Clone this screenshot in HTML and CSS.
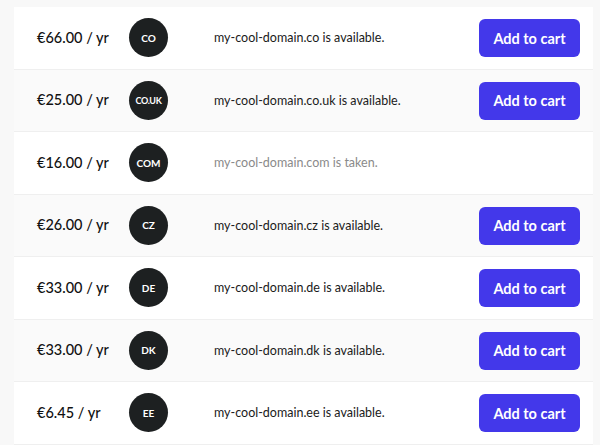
FILE: index.html
```html
<!DOCTYPE html>
<html>
<head>
<meta charset="utf-8">
<link rel="stylesheet" href="styles.css">
</head>
<body>
<div class="list">
  <div class="row">
    <div class="price">€66.00 / yr</div>
    <div class="tld">CO</div>
    <div class="msg">my-cool-domain.co is available.</div>
    <button class="btn">Add to cart</button>
  </div>
  <div class="row">
    <div class="price">€25.00 / yr</div>
    <div class="tld tld-long">CO.UK</div>
    <div class="msg">my-cool-domain.co.uk is available.</div>
    <button class="btn">Add to cart</button>
  </div>
  <div class="row">
    <div class="price">€16.00 / yr</div>
    <div class="tld">COM</div>
    <div class="msg taken">my-cool-domain.com is taken.</div>
  </div>
  <div class="row">
    <div class="price">€26.00 / yr</div>
    <div class="tld">CZ</div>
    <div class="msg">my-cool-domain.cz is available.</div>
    <button class="btn">Add to cart</button>
  </div>
  <div class="row">
    <div class="price">€33.00 / yr</div>
    <div class="tld">DE</div>
    <div class="msg">my-cool-domain.de is available.</div>
    <button class="btn">Add to cart</button>
  </div>
  <div class="row">
    <div class="price">€33.00 / yr</div>
    <div class="tld">DK</div>
    <div class="msg">my-cool-domain.dk is available.</div>
    <button class="btn">Add to cart</button>
  </div>
  <div class="row">
    <div class="price">€6.45 / yr</div>
    <div class="tld">EE</div>
    <div class="msg">my-cool-domain.ee is available.</div>
    <button class="btn">Add to cart</button>
  </div>
</div>
</body>
</html>
```

FILE: styles.css
```css
html, body {
  margin: 0;
  background: #f8f8f8;
}
body {
  padding: 7px 7px 0 14px;
  font-family: Lato, "Open Sans", sans-serif;
  color: #111;
}
.list {
  width: 579px;
  background: #fff;
}
.row {
  display: flex;
  align-items: center;
  height: 61.5px;
  border-bottom: 1px solid #efefef;
  padding: 0 13px 0 23px;
  box-sizing: content-box;
}
.row:nth-child(even) {
  background: #fafafa;
}
.price {
  width: 92px;
  font-size: 14.5px;
  font-weight: 500;
  color: #111;
  margin-top: -1px;
}
.tld {
  width: 39px;
  height: 39px;
  border-radius: 50%;
  background: #1d2021;
  color: #fff;
  font-size: 10px;
  font-weight: 700;
  display: flex;
  align-items: center;
  justify-content: center;
  margin-right: 46px;
  flex: none;
}
.tld-long {
  font-size: 9px;
  letter-spacing: -0.3px;
}
.msg {
  flex: 1;
  font-size: 12.5px;
  color: #1a1a1a;
}
.msg.taken {
  color: #8a8a8a;
}
.btn {
  width: 101px;
  height: 38px;
  border: none;
  border-radius: 6px;
  background: #4338ea;
  color: #fff;
  font-family: Lato, "Open Sans", sans-serif;
  font-size: 14.5px;
  font-weight: 700;
  padding: 0;
  margin-top: 1px;
}
```
